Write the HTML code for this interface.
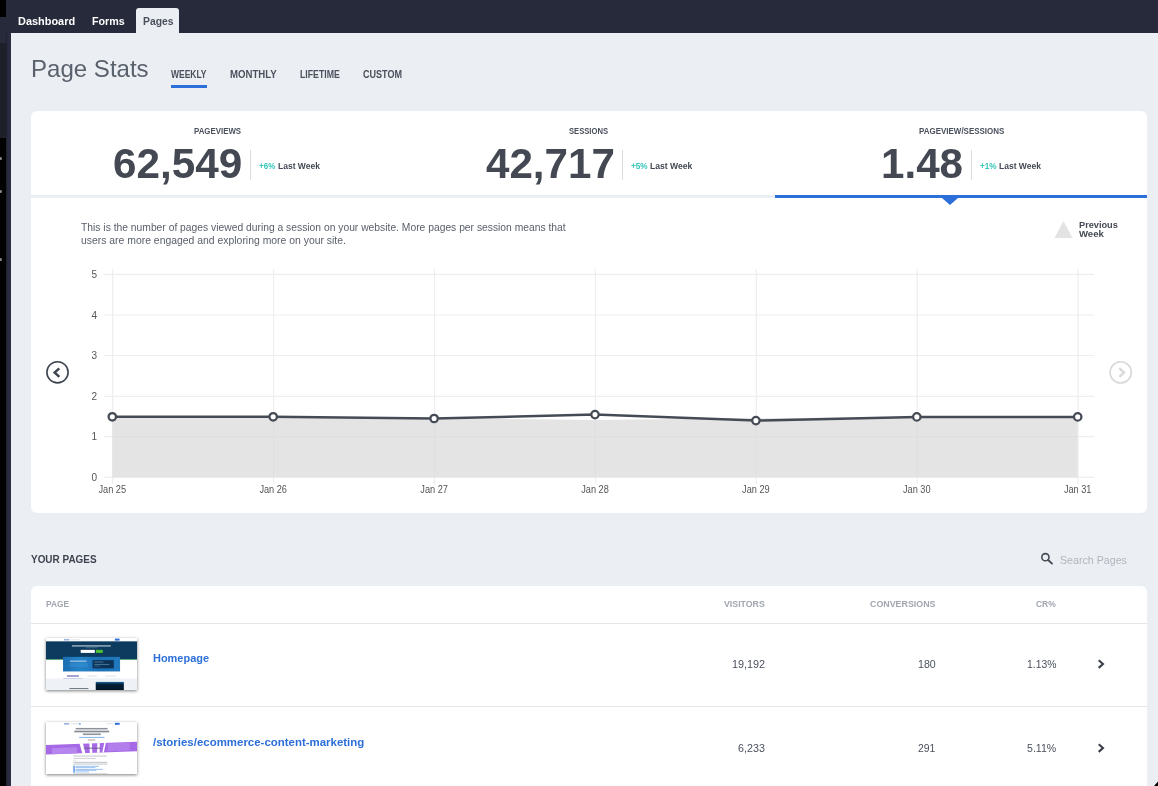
<!DOCTYPE html>
<html><head><meta charset="utf-8">
<style>
*{box-sizing:border-box;margin:0;padding:0}
html,body{width:1158px;height:786px;overflow:hidden}
body{font-family:"Liberation Sans",sans-serif;background:#ebeef3;position:relative;color:#4a505c}
.abs{position:absolute}
div.t{position:absolute;white-space:nowrap;transform-origin:0 50%}
#topbar{left:0;top:0;width:1158px;height:33px;background:#272a3b}
#lstrip{left:0;top:33px;width:11px;height:753px;background:linear-gradient(90deg,#1c1e2b 0,#1c1e2b 6px,#292c3e 8px,#2b2e41 11px)}
#lblack{left:0;top:138px;width:6px;height:648px;background:#020203}
#lb2{left:0;top:0;width:6px;height:17px;background:#000}
#lb3{left:0;top:43px;width:6px;height:95px;background:#1e2029}
#lb4{left:0;top:17px;width:6px;height:26px;background:#272a3b}
.dot{position:absolute;left:0;width:2px;height:3px;background:#8a8a8a;border-radius:0 2px 2px 0}
.nav{top:14px;font-weight:bold;font-size:11.5px;color:#fff;line-height:14px}
#pagestab{left:136px;top:8px;width:43px;height:26px;background:#ebeef3;border-radius:3px 3px 0 0}
#h1{left:31px;top:52px;font-size:24px;line-height:34px;color:#59616c}
.tab{top:69px;font-weight:bold;font-size:10px;line-height:12px;color:#4a505c}
.card{position:absolute;left:31px;width:1116px;background:#fff;border-radius:6px}
.slabel{top:126px;font-weight:bold;font-size:8.5px;line-height:11px;color:#4a505c}
.big{top:140px;font-weight:bold;font-size:42px;line-height:48px;color:#434853}
.vdiv{position:absolute;top:150px;width:1px;height:30px;background:#d9dce0}
.lw{top:159.5px;font-weight:bold;font-size:9px;line-height:12px;color:#434853}
.pc{top:159.5px;font-weight:bold;font-size:9px;line-height:12px;color:#36c7ba}
.desc{left:81px;font-size:11px;line-height:13px;color:#5a606b}
.leg{left:1079px;font-weight:bold;font-size:9px;line-height:10px;color:#434853}
#chart{position:absolute;left:0;top:0}
#chart text{font-family:"Liberation Sans",sans-serif;font-size:10px;fill:#555}
#sect{left:31px;top:552px;font-weight:bold;font-size:11px;line-height:14px;color:#3e444e}
#search{left:1061px;top:553px;font-size:11px;line-height:14px;color:#b1b6be}
.th{top:598px;font-weight:bold;font-size:9.5px;line-height:12px;color:#a1a6ae}
.td{font-size:10.5px;line-height:14px;color:#4a505c}
.hl{position:absolute;left:31px;width:1116px;height:1px;background:#e4e6ea}
.lnk{left:153px;font-weight:bold;font-size:11px;line-height:14px;color:#2d6fd9}
.thumb{position:absolute;left:46px;width:91px;height:52px;background:#fff;box-shadow:0 1px 3px rgba(0,0,0,.5)}
.thumb svg{display:block;position:absolute;left:0;top:0}
.thumb i{position:absolute;display:block}
#wrap{position:absolute;left:0;top:0;width:1158px;height:786px;will-change:transform}
</style></head><body><div id="wrap">
<div class="abs" id="topbar"></div>
<div class="abs" id="lstrip"></div>
<div class="abs" id="lblack"></div><div class="abs" id="lb2"></div><div class="abs" id="lb3"></div><div class="abs" id="lb4"></div>
<div class="dot" style="top:157px"></div><div class="dot" style="top:190px"></div><div class="dot" style="top:258px"></div>
<div class="t nav" id="nDash" style="left:17.5938px;transform:scaleX(0.950);">Dashboard</div>
<div class="t nav" id="nForms" style="left:92px;transform:scaleX(0.932);">Forms</div>
<div class="abs" id="pagestab"></div>
<div class="t nav" id="nPages" style="left:143px;transform:scaleX(0.901);color:#4a505c">Pages</div>

<div class="t" id="h1" style="left:31px;transform:scaleX(1.002);">Page Stats</div>
<div class="t tab" id="tabW" style="left:171px;transform:scaleX(0.848);">WEEKLY</div>
<div class="t tab" id="tabM" style="left:230px;transform:scaleX(0.963);">MONTHLY</div>
<div class="t tab" id="tabL" style="left:299.594px;transform:scaleX(0.874);">LIFETIME</div>
<div class="t tab" id="tabC" style="left:362.688px;transform:scaleX(0.903);">CUSTOM</div>
<div class="abs" style="left:171px;top:85px;width:36px;height:3px;background:#2d6fd9"></div>

<div class="card" id="card1" style="top:111px;height:402px"></div>
<div class="t slabel" id="sl1" style="left:193.688px;transform:scaleX(0.926);">PAGEVIEWS</div>
<div class="t slabel" id="sl2" style="left:569px;transform:scaleX(0.898);">SESSIONS</div>
<div class="t slabel" id="sl3" style="left:918.688px;transform:scaleX(0.938);">PAGEVIEW/SESSIONS</div>
<div class="t big" id="b1" style="left:113.094px;transform:scaleX(1.006);">62,549</div>
<div class="t big" id="b2" style="left:485.797px;transform:scaleX(1.003);">42,717</div>
<div class="t big" id="b3" style="left:881.391px;transform:scaleX(1.003);">1.48</div>
<div class="vdiv" style="left:250px"></div>
<div class="vdiv" style="left:622px"></div>
<div class="vdiv" style="left:971px"></div>
<div class="t pc" id="pc1" style="left:258.797px;transform:scaleX(0.891);">+6%</div><div class="t lw" id="lw1" style="left:278px;transform:scaleX(0.945);">Last Week</div>
<div class="t pc" id="pc2" style="left:631px;transform:scaleX(0.912);">+5%</div><div class="t lw" id="lw2" style="left:650px;transform:scaleX(0.955);">Last Week</div>
<div class="t pc" id="pc3" style="left:979.594px;transform:scaleX(0.912);">+1%</div><div class="t lw" id="lw3" style="left:998.891px;transform:scaleX(0.946);">Last Week</div>
<div class="abs" style="left:31px;top:195px;width:1116px;height:3px;background:#ebeef3"></div>
<div class="abs" style="left:775px;top:195px;width:372px;height:3px;background:#2d6fd9"></div>
<div class="abs" style="left:942px;top:198px;width:0;height:0;border-left:8px solid transparent;border-right:8px solid transparent;border-top:7px solid #2d6fd9"></div>

<div class="t desc" id="d1" style="left:81px;transform:scaleX(0.937);top:221px">This is the number of pages viewed during a session on your website. More pages per session means that</div>
<div class="t desc" id="d2" style="left:81px;transform:scaleX(0.946);top:234px">users are more engaged and exploring more on your site.</div>
<svg class="abs" style="left:1053px;top:219px" width="22" height="22"><path d="M1.5 19 L10.5 2 L19.6 19 Z" fill="#e3e3e3"/></svg>
<div class="t leg" id="lg1" style="left:1079px;transform:scaleX(1.021);top:220px">Previous</div>
<div class="t leg" id="lg2" style="left:1079px;transform:scaleX(1.062);top:229px">Week</div>

<svg id="chart" width="1158" height="786" viewBox="0 0 1158 786">
 <g stroke="#eeeeee" stroke-width="1.2" fill="none">
  <path d="M104 274.4H1094M104 315H1094M104 355.5H1094M104 396.3H1094M104 436.7H1094M104 477.3H1094"/>
  <path d="M112.7 269V484M273.6 269V484M434.5 269V484M595.4 269V484M756.3 269V484M917.2 269V484M1078.1 269V484"/>
 </g>
 <path d="M112.3 417 L273.2 417 L434.1 418 L595 420 L755.9 418.3 L916.8 417 L1077.7 417 L1077.7 477.3 L112.3 477.3 Z" fill="#e4e4e4"/>
 <g stroke="#dcdcdc" stroke-width="1.2" fill="none" opacity=".6">
  <path d="M273.6 417V477M434.5 418V477M595.4 420V477M756.3 418.3V477M917.2 417V477"/>
  <path d="M112.3 436.7H1077.7"/>
 </g>
 <path d="M112.3 416.8 L273.2 416.8 L434.1 418.5 L595 414.6 L755.9 420.6 L916.8 416.9 L1077.7 416.9" fill="none" stroke="#454b55" stroke-width="2.5" stroke-linejoin="round"/>
 <g fill="#fff" stroke="#454b55" stroke-width="2.3">
  <circle cx="112.3" cy="416.8" r="3.7"/><circle cx="273.2" cy="416.8" r="3.7"/><circle cx="434.1" cy="418.5" r="3.7"/><circle cx="595" cy="414.6" r="3.7"/><circle cx="755.9" cy="420.6" r="3.7"/><circle cx="916.8" cy="416.9" r="3.7"/><circle cx="1077.7" cy="416.9" r="3.7"/>
 </g>
 <g text-anchor="end">
  <text x="97" y="278">5</text><text x="97" y="318.6">4</text><text x="97" y="359.1">3</text><text x="97" y="399.9">2</text><text x="97" y="440.3">1</text><text x="97" y="480.9">0</text>
 </g>
 <g text-anchor="middle">
  <text x="112.3" y="493" textLength="27.6" lengthAdjust="spacingAndGlyphs">Jan 25</text><text x="273.2" y="493" textLength="27.6" lengthAdjust="spacingAndGlyphs">Jan 26</text><text x="434.1" y="493" textLength="27.6" lengthAdjust="spacingAndGlyphs">Jan 27</text><text x="595" y="493" textLength="27.6" lengthAdjust="spacingAndGlyphs">Jan 28</text><text x="755.9" y="493" textLength="27.6" lengthAdjust="spacingAndGlyphs">Jan 29</text><text x="916.8" y="493" textLength="27.6" lengthAdjust="spacingAndGlyphs">Jan 30</text><text x="1077.7" y="493" textLength="27.6" lengthAdjust="spacingAndGlyphs">Jan 31</text>
 </g>
 <circle cx="57.5" cy="372.3" r="10.6" fill="#fff" stroke="#3e4550" stroke-width="1.6"/>
 <path d="M59.3 368.4 L54.6 372.5 L59.3 376.8" fill="none" stroke="#3e4550" stroke-width="2.4"/>
 <circle cx="1120.7" cy="372.4" r="10.6" fill="#fff" stroke="#d7d9db" stroke-width="1.6"/>
 <path d="M1119.3 368.1 L1124 372.5 L1119.3 376.9" fill="none" stroke="#d7d9db" stroke-width="2.4"/>
 <circle cx="1045.4" cy="557.2" r="3.6" fill="none" stroke="#454b55" stroke-width="1.6"/>
 <path d="M1048.2 560 L1052 563.6" stroke="#454b55" stroke-width="1.9" stroke-linecap="round"/>
</svg>

<svg class="abs" style="left:1148px;top:776px" width="10" height="10"><path d="M6 10 L10 5.5 L10 10 Z" fill="#000"/></svg>
<div class="t" id="sect" style="left:31px;transform:scaleX(0.904);">YOUR PAGES</div>
<div class="t" id="search" style="left:1059.89px;transform:scaleX(0.968);">Search Pages</div>

<div class="card" id="card2" style="top:586px;height:210px"></div>
<div class="t th" id="th1" style="left:46px;transform:scaleX(0.878);">PAGE</div>
<div class="t th" id="th2" style="left:724px;transform:scaleX(0.923);">VISITORS</div>
<div class="t th" id="th3" style="left:870px;transform:scaleX(0.932);">CONVERSIONS</div>
<div class="t th" id="th4" style="left:1036px;transform:scaleX(0.892);">CR%</div>
<div class="hl" style="top:623px"></div>
<div class="hl" style="top:706px"></div>

<div class="thumb" id="t1" style="top:638px"><svg width="91" height="52" viewBox="0 0 91.3 51.3" preserveAspectRatio="none"><defs><filter id="bl" x="-5%" y="-5%" width="110%" height="110%"><feGaussianBlur stdDeviation="0.35"/></filter><linearGradient id="gb" x1="0" x2="1"><stop offset="0" stop-color="#1c6db0"/><stop offset=".3" stop-color="#2583c9"/><stop offset=".6" stop-color="#1d71b6"/><stop offset="1" stop-color="#2179be"/></linearGradient><linearGradient id="gd" x1="0" x2="0" y1="0" y2="1"><stop offset="0" stop-color="#1a66a3"/><stop offset=".3" stop-color="#06203a"/><stop offset="1" stop-color="#041424"/></linearGradient></defs>
<g filter="url(#bl)"><rect width="91.3" height="51.3" fill="#fff"/>
<rect x="18" y=".9" width="5.4" height="1.6" fill="#9db4dd"/><rect x="24.5" y="1.2" width="9" height="1" fill="#e3e6ea"/><rect x="69.1" y=".6" width="4.7" height="2" fill="#2d6fd9"/>
<rect x="0" y="3.3" width="91.3" height="18" fill="#0b3a5e"/><rect x="0" y="21.1" width="91.3" height=".6" fill="#58b368"/>
<rect x="26" y="7" width="39" height="1.6" fill="#dfe7ee" opacity=".6"/><rect x="40" y="9.4" width="12" height=".6" fill="#5f7f99"/>
<rect x="34.8" y="11.7" width="14.2" height="3" fill="#fff"/><rect x="50.1" y="11.7" width="6.9" height="3" fill="#4cc230"/>
<rect x="17.1" y="18.6" width="57.2" height="14.4" fill="url(#gb)"/>
<rect x="46.7" y="21.8" width="21.3" height="8.1" fill="#0e3358"/>
<rect x="24" y="22.3" width="16.7" height="1.1" fill="#cfe3f3" opacity=".8"/><rect x="24" y="24.6" width="18" height="4" fill="#3a8fd0" opacity=".5"/>
<rect x="48.5" y="23.3" width="9" height=".8" fill="#4f86ad"/><rect x="48.5" y="25.6" width="15" height=".8" fill="#4f86ad"/><rect x="48.5" y="27.4" width="6" height=".6" fill="#3a7aa0"/>
<rect x="21" y="36.6" width="12" height="1.8" fill="#9a9bd0"/><rect x="41.5" y="37" width="9.5" height="1.2" fill="#e4e6ea"/><rect x="59.5" y="37" width="11" height="1.2" fill="#e4e6ea"/>
<rect x="17.3" y="39.6" width="57" height=".4" fill="#e1e3ea"/><rect x="17.3" y="39.5" width="19.2" height=".6" fill="#8f8fd0"/>
<rect x="0" y="40" width="91.3" height="11.3" fill="#eef2f6"/>
<rect x="49.9" y="43.3" width="28.2" height="8" fill="url(#gd)"/>
<rect x="23.5" y="49.4" width="19" height="1" fill="#6d737c"/></g></svg></div>
<div class="thumb" id="t2" style="top:722px"><svg width="91" height="52" viewBox="0 0 91.3 51.7" preserveAspectRatio="none">
<g filter="url(#bl)"><rect width="91.3" height="51.7" fill="#fff"/>
<rect x="18" y=".9" width="5.4" height="1.7" fill="#9db4dd"/><rect x="25" y="1.2" width="7.5" height="1" fill="#dfe3e8"/><rect x="33" y="1" width="1.8" height="1.6" fill="#7aa7e6"/><rect x="60.5" y="1.2" width="7" height="1" fill="#dfe3e8"/><rect x="69.1" y=".8" width="4.8" height="2" fill="#2d6fd9"/>
<rect x="29.8" y="5.9" width="32" height="1.5" fill="#8e939b"/><rect x="28.4" y="8.6" width="35" height="1.7" fill="#858a93"/><rect x="37" y="11.4" width="18" height="1.6" fill="#8e939b"/>
<rect x="33.2" y="14.8" width="25.4" height="1" fill="#7fb0ea"/><rect x="42" y="17.2" width="7.5" height="1.3" fill="#c9b9a6"/>
<path d="M0 22.8 L91.3 19.6 L91.3 29.2 L0 32.4 Z" fill="#a76be6"/>
<path d="M6 26 L31 25 L31 31 L6 32Z" fill="#b685ee"/><path d="M62 21.3 L84 20.6 L84 28.4 L62 29.2Z" fill="#b27eec"/>
<path d="M33.5 21.2 L37 21 L39.5 31 L36.5 31.2Z M43.5 20.8 L46 20.7 L46.5 30.8 L44 30.9Z M51.5 20.6 L54 20.5 L53.8 30.5 L51.2 30.6Z M58.5 20.3 L56.5 30.4 L58 30.3 L60.2 20.2Z" fill="#fff"/>
<rect x="38" y="25.4" width="17" height="1.3" fill="#6a5a88" opacity=".7"/>
<rect x="27.5" y="33.3" width="33.5" height="1.1" fill="#c9ccd1"/><rect x="27.5" y="35.7" width="22.5" height="1" fill="#cfd2d6"/><rect x="27.5" y="37.6" width="3" height=".8" fill="#d6d8dc"/>
<rect x="27.5" y="39.6" width="34" height="1.1" fill="#c4c7cc"/><rect x="27.5" y="41.3" width="34" height="1.1" fill="#c9ccd1"/>
<rect x="27.3" y="43.4" width="1.7" height="7" fill="#6fa3e8"/>
<rect x="29.6" y="43.6" width="23.5" height=".9" fill="#8db8ee"/><rect x="29.6" y="44.9" width="20" height=".9" fill="#9cc1f0"/><rect x="29.6" y="46.6" width="27.5" height=".9" fill="#8db8ee"/><rect x="29.6" y="47.9" width="21" height=".9" fill="#9cc1f0"/><rect x="29.6" y="49.2" width="13.5" height=".9" fill="#9cc1f0"/>
<rect x="27.5" y="50.9" width="34" height=".8" fill="#d3d5d9"/></g></svg></div>
<div class="t lnk" id="lk1" style="left:153px;transform:scaleX(0.997);top:651px">Homepage</div>
<div class="t lnk" id="lk2" style="left:153px;transform:scaleX(1.041);top:735px">/stories/ecommerce-content-marketing</div>

<div class="t td" id="v1" style="left:731.594px;transform:scaleX(1.032);top:657px">19,192</div>
<div class="t td" id="c1" style="left:918px;transform:scaleX(1.013);top:657px">180</div>
<div class="t td" id="r1" style="left:1026.89px;transform:scaleX(0.987);top:657px">1.13%</div>
<div class="t td" id="v2" style="left:737.594px;transform:scaleX(1.024);top:741px">6,233</div>
<div class="t td" id="c2" style="left:918px;transform:scaleX(0.990);top:741px">291</div>
<div class="t td" id="r2" style="left:1026.69px;transform:scaleX(1.007);top:741px">5.11%</div>
<svg class="abs" style="left:1094px;top:656px" width="16" height="16"><path d="M4.7 4.2 L9 8 L4.7 11.9" fill="none" stroke="#3a3f4a" stroke-width="2.1"/></svg>
<svg class="abs" style="left:1094px;top:740px" width="16" height="16"><path d="M4.7 4.2 L9 8 L4.7 11.9" fill="none" stroke="#3a3f4a" stroke-width="2.1"/></svg>
</div></body></html>
